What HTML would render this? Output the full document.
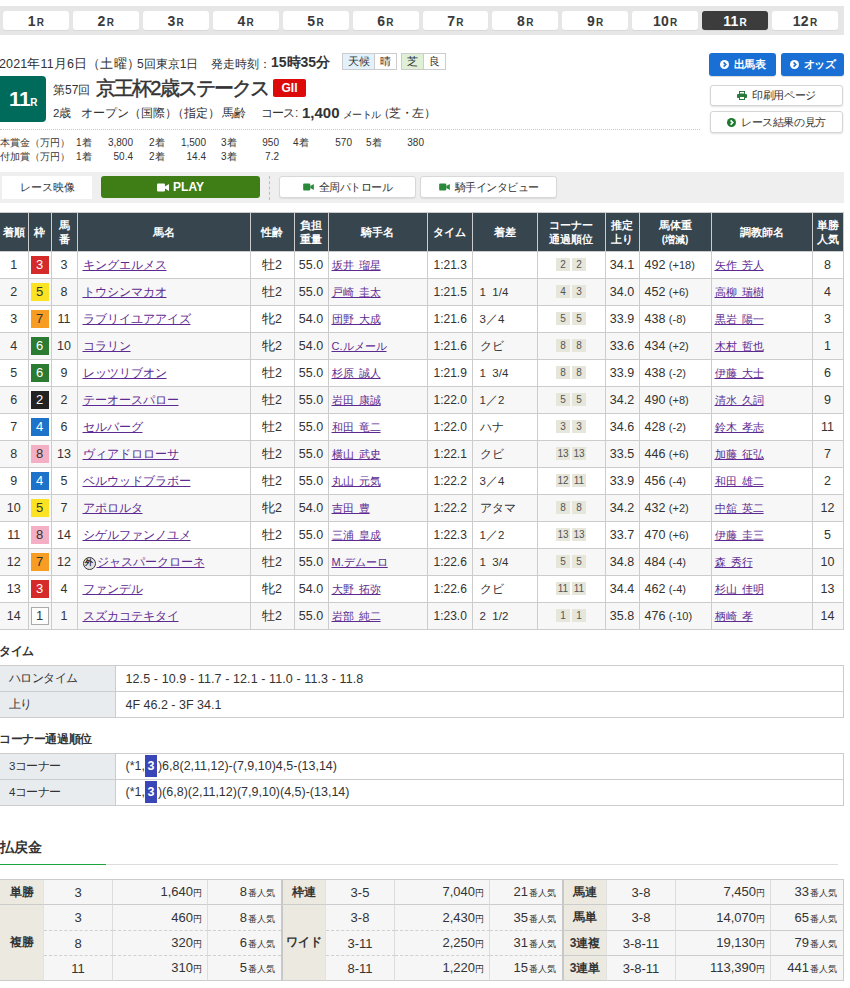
<!DOCTYPE html>
<html lang="ja">
<head>
<meta charset="utf-8">
<style>
*{box-sizing:border-box;margin:0;padding:0}
html,body{width:850px;height:988px;overflow:hidden;background:#fff}
body{font-family:"Liberation Sans",sans-serif;color:#333;font-size:12px;position:relative}
.abs{position:absolute}
.t{position:absolute;white-space:nowrap;line-height:16px}
.cd{top:105px;font-size:11.5px}
.pz{font-size:10px;line-height:14px}
/* nav */
#nav{left:0;top:6px;width:844px;height:29px;background:#e6e6e6;padding:5px 6px 0 3px;display:flex;gap:4px}
#nav div{flex:1;height:19px;background:#fff;border-radius:3px;text-align:center;font-weight:bold;font-size:14px;line-height:20px;color:#3a3a3a;letter-spacing:0.3px;box-shadow:0 1px 0 rgba(0,0,0,.06)}
#nav div small{font-size:10px;margin-left:1px}
#nav div.on{background:#3c3c3c;color:#fff}
/* header */
#date{left:0;top:53px;font-size:12.5px;line-height:18px;color:#333;white-space:nowrap}
#date b{font-size:15px;font-weight:bold}
.wx{position:absolute;top:53px;height:17px;font-size:11px;line-height:15px;text-align:center;border:1px solid #ccc;color:#333}
#rno{left:0;top:76px;width:46px;height:46px;background:#006b5a;border-radius:0 4px 4px 0;color:#fff;text-align:center;font-weight:bold;font-size:21px;line-height:45px;letter-spacing:-0.5px}
#rno small{font-size:10px}
#kai{left:53px;top:82px;font-size:12px;line-height:16px}
#title{left:96px;top:76px;font-size:20px;font-weight:normal;-webkit-text-stroke:0.45px #333;line-height:24px;white-space:nowrap;letter-spacing:-1.9px}
#grade{left:273px;top:79px;width:33px;height:18px;background:#dd0a0a;color:#fff;border-radius:2px;font-size:12px;font-weight:bold;line-height:18px;text-align:center}
#cond{left:53px;top:104px;font-size:12px;line-height:18px;white-space:nowrap}
#cond b{font-size:15px}
#dots{left:0;top:129px;width:700px;border-top:1px dotted #c8c8c8}
.prize{left:0;font-size:11px;line-height:13px;white-space:nowrap}
.btnb{position:absolute;top:53px;height:23px;background:#1a6fd4;color:#fff;font-weight:bold;font-size:11px;letter-spacing:-0.4px;line-height:23px;border-radius:3px;display:flex;align-items:center;justify-content:center;gap:5px;box-shadow:0 1px 1px rgba(0,0,0,.15)}
.btnw{position:absolute;left:710px;width:133px;height:21px;background:#fff;border:1px solid #d5d5d5;border-radius:3px;font-size:11px;letter-spacing:-0.4px;line-height:19px;display:flex;align-items:center;justify-content:center;gap:5px;box-shadow:0 1px 2px rgba(0,0,0,.12)}
/* video */
#vbar{left:0;top:172px;width:844px;height:31px;background:#efefef}
#vlabel{left:2px;top:176px;width:90px;height:23px;background:#fff;text-align:center;font-size:11px;line-height:23px}
#play{left:101px;top:176px;width:159px;height:22px;background:#3f7d16;border-radius:3px;color:#fff;font-weight:bold;font-size:12px;line-height:22px;display:flex;align-items:center;justify-content:center;gap:4px}
#vsep{left:269px;top:176px;height:24px;border-left:1px dashed #bbb}
.vbtn{position:absolute;top:176px;height:22px;width:137px;background:#fff;border:1px solid #d8d8d8;border-radius:3px;font-size:10.5px;letter-spacing:-0.5px;line-height:20px;display:flex;align-items:center;justify-content:center;gap:5px;box-shadow:0 1px 1px rgba(0,0,0,.08)}

/* results table */
#res{position:absolute;left:0;top:212px;width:843px;border-collapse:collapse;table-layout:fixed}
#res th{background:#37454f;color:#fff;font-weight:bold;font-size:11px;line-height:14px;height:39px;border:1px solid #ccc;text-align:center;padding:0}
#res td{height:27px;border:1px solid #ccc;font-size:12.5px;line-height:16px;padding:0;white-space:nowrap;overflow:hidden;color:#333}
#res tr:nth-child(odd) td{background:#f7f7f7}
#res td:first-child,#res th:first-child{border-left:none}
#res td.c{text-align:center}
#res td.nm{padding-left:5px;font-size:12px}
#res td.jk{padding-left:3px;font-size:11px;word-spacing:2px}
#res a{color:#5d2a91;text-decoration:underline}
#res td.tm{padding-left:6px;font-size:12px}
#res td.mg{padding-left:7px;font-size:11.5px}
#res td.cn{text-align:center;font-size:10px}
#res td.cn span{display:inline-block;width:14px;height:13px;line-height:13px;background:#e6e6da;margin:0 1px;color:#555}
#res td.wt{padding-left:5px}
#res td.wt small{font-size:11px}
#res th small{font-size:10px}
.wk{display:inline-block;width:18px;height:18px;line-height:18px;text-align:center;font-size:13px}
.w1{background:#fff;border:1px solid #aaa;line-height:16px;color:#333}
.w2{background:#222;color:#fff}
.w3{background:#d42a2a;color:#fff}
.w4{background:#1d72c9;color:#fff}
.w5{background:#fbe324;color:#333}
.w6{background:#2b7b33;color:#fff}
.w7{background:#f79d24;color:#333}
.w8{background:#f4afc4;color:#333}
.gai{font-style:normal;display:inline-block;width:13px;height:13px;border-radius:50%;background:#e4e4e4;border:1.5px solid #333;color:#222;font-size:8px;line-height:10px;text-align:center;margin-right:1px;vertical-align:1px;font-weight:bold}

/* time / corner */
.sech{position:absolute;left:-1px;font-size:11.5px;font-weight:bold;letter-spacing:-0.4px;line-height:16px;color:#333}
.info{position:absolute;left:0;width:844px;border-collapse:collapse;table-layout:fixed}
.info th{width:115px;background:#e9ecef;border:1px solid #ccc;border-left:none;font-weight:normal;text-align:left;padding-left:9px;font-size:11.5px;letter-spacing:-0.6px;height:26px;color:#333}
.info td{border:1px solid #ccc;padding-left:10px;font-size:12.5px;height:26px;color:#333;white-space:nowrap}
.info td .hl{display:inline-block;background:#3a45b8;color:#fff;width:12px;height:22px;line-height:22px;text-align:center;vertical-align:middle;margin:-2px 1px 0 0;font-weight:bold}
/* payout */
#payh{left:0;top:838px;font-size:14px;font-weight:bold;line-height:18px}
#payline{left:0;top:864px;width:838px;border-top:1px solid #ddd}
#payline2{left:0;top:864px;width:106px;border-top:1px solid #1ba53c}
.pay{position:absolute;top:879px;border-collapse:separate;border-spacing:0;table-layout:fixed;border-top:1px solid #ccc}
.pay th{background:#ebe9e0;border-left:2px solid #c8c8c8;border-bottom:1px solid #ccc;border-right:1px solid #e2e2e2;font-size:12px;font-weight:bold;color:#333;text-align:center;padding:0}
.pay.first th{border-left:none}
.pay td{background:#f6f6f6;border-bottom:1px solid #ccc;border-right:1px solid #ddd;font-size:13px;padding:0;color:#333;white-space:nowrap}
.pay td:last-child{border-right:none}
.pay.last td:last-child{border-right:1px solid #ccc}
.pay td.n{text-align:center}
.pay td.y{text-align:right;padding-right:5px}
.pay td.y small{font-size:9px}
.pay td.p{text-align:right;padding-right:6px}
.pay td.p small{font-size:9px;margin-left:1px}
.pay tr.d td{border-bottom:1px dashed #d0d0d0}
.pay tr.r1{height:25px}.pay tr.r2{height:26px}.pay tr.r3{height:25px}.pay tr.r4{height:25px}
</style>
</head>
<body>
<div id="nav" class="abs">
<div>1<small>R</small></div><div>2<small>R</small></div><div>3<small>R</small></div><div>4<small>R</small></div><div>5<small>R</small></div><div>6<small>R</small></div><div>7<small>R</small></div><div>8<small>R</small></div><div>9<small>R</small></div><div>10<small>R</small></div><div class="on">11<small>R</small></div><div>12<small>R</small></div>
</div>

<div class="t" style="left:-1px;top:56px;font-size:12.5px;letter-spacing:0.15px">2021年11月6日（土曜）</div>
<div class="t" style="left:137px;top:56px;font-size:12px">5回東京1日</div>
<div class="t" style="left:211px;top:56px;font-size:12px">発走時刻：</div>
<div class="t" style="left:271px;top:53px;font-size:14px;font-weight:bold;line-height:18px">15時35分</div>
<div class="wx" style="left:342px;width:33px;background:#e2f1fb">天候</div>
<div class="wx" style="left:374px;width:23px;background:#fff">晴</div>
<div class="wx" style="left:401px;width:23px;background:#dff0d6">芝</div>
<div class="wx" style="left:423px;width:23px;background:#fff">良</div>

<div id="rno" class="abs">11<small>R</small></div>
<div id="kai" class="abs">第57回</div>
<div id="title" class="abs">京王杯2歳ステークス</div>
<div id="grade" class="abs">GII</div>
<div class="t cd" style="left:53px">2歳</div>
<div class="t cd" style="left:81px">オープン（国際）</div>
<div class="t cd" style="left:172px">（指定）</div>
<div class="t cd" style="left:222px">馬齢</div>
<div class="t cd" style="left:261px;letter-spacing:-1px">コース</div><div class="t" style="left:295px;top:105px;font-size:12px">:</div>
<div class="t" style="left:302px;top:104px;font-size:15px;font-weight:bold;line-height:18px">1,400</div>
<div class="t" style="left:343px;top:108px;font-size:9.5px;line-height:14px;letter-spacing:-0.6px">メートル</div>
<div class="t cd" style="left:378px;letter-spacing:-0.6px">（芝・左）</div>
<div id="dots" class="abs"></div>
<div class="t pz" style="left:0;top:136px">本賞金（万円）</div>
<div class="t pz" style="left:0;top:150px">付加賞（万円）</div>
<div class="t pz" style="left:76px;top:136px">1着</div><div class="t pz r" style="right:717px;top:136px">3,800</div>
<div class="t pz" style="left:149px;top:136px">2着</div><div class="t pz r" style="right:644px;top:136px">1,500</div>
<div class="t pz" style="left:221px;top:136px">3着</div><div class="t pz r" style="right:571px;top:136px">950</div>
<div class="t pz" style="left:293px;top:136px">4着</div><div class="t pz r" style="right:498px;top:136px">570</div>
<div class="t pz" style="left:366px;top:136px">5着</div><div class="t pz r" style="right:426px;top:136px">380</div>
<div class="t pz" style="left:76px;top:150px">1着</div><div class="t pz r" style="right:717px;top:150px">50.4</div>
<div class="t pz" style="left:149px;top:150px">2着</div><div class="t pz r" style="right:644px;top:150px">14.4</div>
<div class="t pz" style="left:221px;top:150px">3着</div><div class="t pz r" style="right:571px;top:150px">7.2</div>

<div class="btnb" style="left:709px;width:67px"><svg width="9" height="9" viewBox="0 0 10 10"><circle cx="5" cy="5" r="5" fill="#fff"/><path d="M4 2.6 L6.4 5 L4 7.4" stroke="#1a6fd4" stroke-width="1.8" fill="none"/></svg><span>出馬表</span></div>
<div class="btnb" style="left:781px;width:63px"><svg width="9" height="9" viewBox="0 0 10 10"><circle cx="5" cy="5" r="5" fill="#fff"/><path d="M4 2.6 L6.4 5 L4 7.4" stroke="#1a6fd4" stroke-width="1.8" fill="none"/></svg><span>オッズ</span></div>
<div class="btnw" style="top:85px"><svg width="10" height="9" viewBox="0 0 10 9"><rect x="2.5" y="0.5" width="5" height="2.5" fill="none" stroke="#2a7a3a" stroke-width="1"/><rect x="0" y="3" width="10" height="4" rx="1" fill="#2a7a3a"/><rect x="2.5" y="5.5" width="5" height="3" fill="#fff" stroke="#2a7a3a" stroke-width="1"/></svg><span>印刷用ページ</span></div>
<div class="btnw" style="top:111px;height:22px"><svg width="9" height="9" viewBox="0 0 10 10"><circle cx="5" cy="5" r="5" fill="#1e7a2e"/><path d="M4 2.6 L6.4 5 L4 7.4" stroke="#fff" stroke-width="1.8" fill="none"/></svg><span>レース結果の見方</span></div>

<div id="vbar" class="abs"></div>
<div id="vlabel" class="abs">レース映像</div>
<div id="play" class="abs"><svg width="12" height="9" viewBox="0 0 12 9"><rect x="0" y="0.5" width="8" height="8" rx="1.2" fill="#fff"/><path d="M8 3.5 L12 1 L12 8 L8 5.5Z" fill="#fff"/></svg><span>PLAY</span></div>
<div id="vsep" class="abs"></div>
<div class="vbtn" style="left:279px"><svg width="11" height="8" viewBox="0 0 12 9"><rect x="0" y="0.5" width="8" height="8" rx="1.2" fill="#2a8a3a"/><path d="M8 3.5 L12 1 L12 8 L8 5.5Z" fill="#2a8a3a"/></svg><span>全周パトロール</span></div>
<div class="vbtn" style="left:420px"><svg width="11" height="8" viewBox="0 0 12 9"><rect x="0" y="0.5" width="8" height="8" rx="1.2" fill="#2a8a3a"/><path d="M8 3.5 L12 1 L12 8 L8 5.5Z" fill="#2a8a3a"/></svg><span>騎手インタビュー</span></div>

<table id="res">
<colgroup><col style="width:28px"><col style="width:23px"><col style="width:26px"><col style="width:173px"><col style="width:44px"><col style="width:34px"><col style="width:99px"><col style="width:45px"><col style="width:65px"><col style="width:68px"><col style="width:34px"><col style="width:72px"><col style="width:101px"><col style="width:31px"></colgroup>
<tr><th>着順</th><th>枠</th><th>馬<br>番</th><th>馬名</th><th>性齢</th><th>負担<br>重量</th><th>騎手名</th><th>タイム</th><th>着差</th><th>コーナー<br>通過順位</th><th>推定<br>上り</th><th>馬体重<br><small>(増減)</small></th><th>調教師名</th><th>単勝<br>人気</th></tr>
<tr><td class="c">1</td><td class="c"><span class="wk w3">3</span></td><td class="c">3</td><td class="nm"><a>キングエルメス</a></td><td class="c">牡2</td><td class="c">55.0</td><td class="jk"><a>坂井 瑠星</a></td><td class="tm">1:21.3</td><td class="mg"></td><td class="cn"><span>2</span><span>2</span></td><td class="c">34.1</td><td class="wt">492 <small>(+18)</small></td><td class="jk"><a>矢作 芳人</a></td><td class="c">8</td></tr>
<tr><td class="c">2</td><td class="c"><span class="wk w5">5</span></td><td class="c">8</td><td class="nm"><a>トウシンマカオ</a></td><td class="c">牡2</td><td class="c">55.0</td><td class="jk"><a>戸崎 圭太</a></td><td class="tm">1:21.5</td><td class="mg">1&nbsp;&nbsp;1/4</td><td class="cn"><span>4</span><span>3</span></td><td class="c">34.0</td><td class="wt">452 <small>(+6)</small></td><td class="jk"><a>高柳 瑞樹</a></td><td class="c">4</td></tr>
<tr><td class="c">3</td><td class="c"><span class="wk w7">7</span></td><td class="c">11</td><td class="nm"><a>ラブリイユアアイズ</a></td><td class="c">牝2</td><td class="c">54.0</td><td class="jk"><a>団野 大成</a></td><td class="tm">1:21.6</td><td class="mg">3／4</td><td class="cn"><span>5</span><span>5</span></td><td class="c">33.9</td><td class="wt">438 <small>(-8)</small></td><td class="jk"><a>黒岩 陽一</a></td><td class="c">3</td></tr>
<tr><td class="c">4</td><td class="c"><span class="wk w6">6</span></td><td class="c">10</td><td class="nm"><a>コラリン</a></td><td class="c">牝2</td><td class="c">54.0</td><td class="jk"><a>C.ルメール</a></td><td class="tm">1:21.6</td><td class="mg">クビ</td><td class="cn"><span>8</span><span>8</span></td><td class="c">33.6</td><td class="wt">434 <small>(+2)</small></td><td class="jk"><a>木村 哲也</a></td><td class="c">1</td></tr>
<tr><td class="c">5</td><td class="c"><span class="wk w6">6</span></td><td class="c">9</td><td class="nm"><a>レッツリブオン</a></td><td class="c">牡2</td><td class="c">55.0</td><td class="jk"><a>杉原 誠人</a></td><td class="tm">1:21.9</td><td class="mg">1&nbsp;&nbsp;3/4</td><td class="cn"><span>8</span><span>8</span></td><td class="c">33.9</td><td class="wt">438 <small>(-2)</small></td><td class="jk"><a>伊藤 大士</a></td><td class="c">6</td></tr>
<tr><td class="c">6</td><td class="c"><span class="wk w2">2</span></td><td class="c">2</td><td class="nm"><a>テーオースパロー</a></td><td class="c">牡2</td><td class="c">55.0</td><td class="jk"><a>岩田 康誠</a></td><td class="tm">1:22.0</td><td class="mg">1／2</td><td class="cn"><span>5</span><span>5</span></td><td class="c">34.2</td><td class="wt">490 <small>(+8)</small></td><td class="jk"><a>清水 久詞</a></td><td class="c">9</td></tr>
<tr><td class="c">7</td><td class="c"><span class="wk w4">4</span></td><td class="c">6</td><td class="nm"><a>セルバーグ</a></td><td class="c">牡2</td><td class="c">55.0</td><td class="jk"><a>和田 竜二</a></td><td class="tm">1:22.0</td><td class="mg">ハナ</td><td class="cn"><span>3</span><span>3</span></td><td class="c">34.6</td><td class="wt">428 <small>(-2)</small></td><td class="jk"><a>鈴木 孝志</a></td><td class="c">11</td></tr>
<tr><td class="c">8</td><td class="c"><span class="wk w8">8</span></td><td class="c">13</td><td class="nm"><a>ヴィアドロローサ</a></td><td class="c">牡2</td><td class="c">55.0</td><td class="jk"><a>横山 武史</a></td><td class="tm">1:22.1</td><td class="mg">クビ</td><td class="cn"><span>13</span><span>13</span></td><td class="c">33.5</td><td class="wt">446 <small>(+6)</small></td><td class="jk"><a>加藤 征弘</a></td><td class="c">7</td></tr>
<tr><td class="c">9</td><td class="c"><span class="wk w4">4</span></td><td class="c">5</td><td class="nm"><a>ベルウッドブラボー</a></td><td class="c">牡2</td><td class="c">55.0</td><td class="jk"><a>丸山 元気</a></td><td class="tm">1:22.2</td><td class="mg">3／4</td><td class="cn"><span>12</span><span>11</span></td><td class="c">33.9</td><td class="wt">456 <small>(-4)</small></td><td class="jk"><a>和田 雄二</a></td><td class="c">2</td></tr>
<tr><td class="c">10</td><td class="c"><span class="wk w5">5</span></td><td class="c">7</td><td class="nm"><a>アポロルタ</a></td><td class="c">牝2</td><td class="c">54.0</td><td class="jk"><a>吉田 豊</a></td><td class="tm">1:22.2</td><td class="mg">アタマ</td><td class="cn"><span>8</span><span>8</span></td><td class="c">34.2</td><td class="wt">432 <small>(+2)</small></td><td class="jk"><a>中舘 英二</a></td><td class="c">12</td></tr>
<tr><td class="c">11</td><td class="c"><span class="wk w8">8</span></td><td class="c">14</td><td class="nm"><a>シゲルファンノユメ</a></td><td class="c">牡2</td><td class="c">55.0</td><td class="jk"><a>三浦 皇成</a></td><td class="tm">1:22.3</td><td class="mg">1／2</td><td class="cn"><span>13</span><span>13</span></td><td class="c">33.7</td><td class="wt">470 <small>(+6)</small></td><td class="jk"><a>伊藤 圭三</a></td><td class="c">5</td></tr>
<tr><td class="c">12</td><td class="c"><span class="wk w7">7</span></td><td class="c">12</td><td class="nm"><i class="gai">外</i><a>ジャスパークローネ</a></td><td class="c">牡2</td><td class="c">55.0</td><td class="jk"><a>M.デムーロ</a></td><td class="tm">1:22.6</td><td class="mg">1&nbsp;&nbsp;3/4</td><td class="cn"><span>5</span><span>5</span></td><td class="c">34.8</td><td class="wt">484 <small>(-4)</small></td><td class="jk"><a>森 秀行</a></td><td class="c">10</td></tr>
<tr><td class="c">13</td><td class="c"><span class="wk w3">3</span></td><td class="c">4</td><td class="nm"><a>ファンデル</a></td><td class="c">牝2</td><td class="c">54.0</td><td class="jk"><a>大野 拓弥</a></td><td class="tm">1:22.6</td><td class="mg">クビ</td><td class="cn"><span>11</span><span>11</span></td><td class="c">34.4</td><td class="wt">462 <small>(-4)</small></td><td class="jk"><a>杉山 佳明</a></td><td class="c">13</td></tr>
<tr><td class="c">14</td><td class="c"><span class="wk w1">1</span></td><td class="c">1</td><td class="nm"><a>スズカコテキタイ</a></td><td class="c">牡2</td><td class="c">55.0</td><td class="jk"><a>岩部 純二</a></td><td class="tm">1:23.0</td><td class="mg">2&nbsp;&nbsp;1/2</td><td class="cn"><span>1</span><span>1</span></td><td class="c">35.8</td><td class="wt">476 <small>(-10)</small></td><td class="jk"><a>柄崎 孝</a></td><td class="c">14</td></tr>

</table>

<div class="sech" style="top:643px">タイム</div>
<table class="info" style="top:665px">
<tr><th>ハロンタイム</th><td style="letter-spacing:0.1px">12.5 - 10.9 - 11.7 - 12.1 - 11.0 - 11.3 - 11.8</td></tr>
<tr><th>上り</th><td>4F 46.2 - 3F 34.1</td></tr>
</table>
<div class="sech" style="top:731px">コーナー通過順位</div>
<table class="info" style="top:753px">
<tr><th>3コーナー</th><td>(*1,<span class="hl">3</span>)6,8(2,11,12)-(7,9,10)4,5-(13,14)</td></tr>
<tr><th>4コーナー</th><td>(*1,<span class="hl">3</span>)(6,8)(2,11,12)(7,9,10)(4,5)-(13,14)</td></tr>
</table>
<div id="payh" class="abs">払戻金</div>
<div id="payline" class="abs"></div>
<div id="payline2" class="abs"></div>
<table class="pay first" style="left:0;width:281px"><colgroup><col style="width:44px"><col style="width:69px"><col style="width:95px"><col style="width:73px"></colgroup>
<tr class="r1"><th>単勝</th><td class="n">3</td><td class="y">1,640<small>円</small></td><td class="p">8<small>番人気</small></td></tr>
<tr class="r2 d"><th rowspan="3">複勝</th><td class="n">3</td><td class="y">460<small>円</small></td><td class="p">8<small>番人気</small></td></tr>
<tr class="r3 d"><td class="n">8</td><td class="y">320<small>円</small></td><td class="p">6<small>番人気</small></td></tr>
<tr class="r4"><td class="n">11</td><td class="y">310<small>円</small></td><td class="p">5<small>番人気</small></td></tr>
</table><table class="pay" style="left:281px;width:281px"><colgroup><col style="width:45px"><col style="width:69px"><col style="width:95px"><col style="width:72px"></colgroup>
<tr class="r1"><th>枠連</th><td class="n">3-5</td><td class="y">7,040<small>円</small></td><td class="p">21<small>番人気</small></td></tr>
<tr class="r2 d"><th rowspan="3">ワイド</th><td class="n">3-8</td><td class="y">2,430<small>円</small></td><td class="p">35<small>番人気</small></td></tr>
<tr class="r3 d"><td class="n">3-11</td><td class="y">2,250<small>円</small></td><td class="p">31<small>番人気</small></td></tr>
<tr class="r4"><td class="n">8-11</td><td class="y">1,220<small>円</small></td><td class="p">15<small>番人気</small></td></tr>
</table><table class="pay last" style="left:562px;width:282px"><colgroup><col style="width:45px"><col style="width:69px"><col style="width:95px"><col style="width:73px"></colgroup>
<tr class="r1"><th>馬連</th><td class="n">3-8</td><td class="y">7,450<small>円</small></td><td class="p">33<small>番人気</small></td></tr>
<tr class="r2"><th>馬単</th><td class="n">3-8</td><td class="y">14,070<small>円</small></td><td class="p">65<small>番人気</small></td></tr>
<tr class="r3"><th>3連複</th><td class="n">3-8-11</td><td class="y">19,130<small>円</small></td><td class="p">79<small>番人気</small></td></tr>
<tr class="r4"><th>3連単</th><td class="n">3-8-11</td><td class="y">113,390<small>円</small></td><td class="p">441<small>番人気</small></td></tr>
</table>
</body>
</html>
